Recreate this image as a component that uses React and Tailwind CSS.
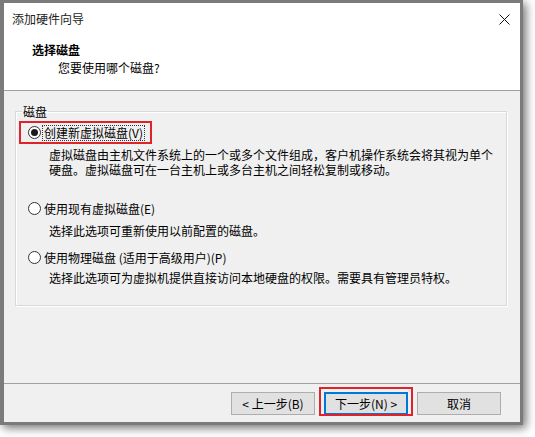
import React from 'react'

const font = { fontFamily: '"Noto Sans CJK SC", "Microsoft YaHei", sans-serif' }

function Radio({ checked }) {
  return (
    <span className="w-[13px] h-[13px] rounded-full border border-[#333] bg-white flex items-center justify-center shrink-0">
      {checked && <span className="w-[7px] h-[7px] rounded-full bg-[#1a1a1a]" />}
    </span>
  )
}

function Btn({ children, primary }) {
  return (
    <button
      className={`w-[84px] h-[23px] text-[12px] leading-none text-black bg-[#e1e1e1] ${
        primary ? 'border-2 border-[#0078d7]' : 'border border-[#adadad]'
      }`}
    >
      {children}
    </button>
  )
}

export default function App() {
  return (
    <div className="w-[535px] h-[437px] bg-white overflow-hidden text-[12px] text-black" style={font}>
      <div className="w-[523px] h-[425px] bg-[#7b7b7b] pt-[3px] pl-[4px] pr-[3px] pb-[3px] shadow-[3px_3px_9px_rgba(0,0,0,0.55)]">
        <div className="w-[516px] h-[419px] bg-[#f0f0f0] flex flex-col">
          {/* title bar */}
          <div className="h-[31px] bg-white flex items-center justify-between pl-[8px] pr-[10px]">
            <span className="text-[12px] text-[#222]">添加硬件向导</span>
            <svg width="11" height="11" viewBox="0 0 11 11" className="mt-[1px]">
              <path d="M0.5 0.5L10.5 10.5M10.5 0.5L0.5 10.5" stroke="#111" strokeWidth="1" />
            </svg>
          </div>

          {/* header */}
          <div className="h-[57px] bg-white border-b border-[#a0a0a0] pl-[28px] pt-[7px] leading-[18px]">
            <div className="font-bold">选择磁盘</div>
            <div className="pl-[26px]">您要使用哪个磁盘?</div>
          </div>

          {/* body */}
          <div className="flex-1 pt-[13px] pl-[11px] pr-[13px] leading-[15px]">
            <fieldset className="border border-[#d9d9d9] shadow-[inset_1px_1px_0_#fff,1px_1px_0_#fff] pb-[20px]">
              <legend className="ml-[6px] px-[1px] leading-[15px]">磁盘</legend>

              <div className="mt-[2px] ml-[3px] w-[133px] h-[23px] border-2 border-[#e0232b] flex items-center pl-[7px] gap-[1px]">
                <Radio checked />
                <span className="border border-dotted border-[#333] px-[1px] leading-[14px]">创建新虚拟磁盘(V)</span>
              </div>
              <div className="mt-[3px] ml-[33px]">
                <div>虚拟磁盘由主机文件系统上的一个或多个文件组成，客户机操作系统会将其视为单个</div>
                <div>硬盘。虚拟磁盘可在一台主机上或多台主机之间轻松复制或移动。</div>
              </div>

              <div className="mt-[23px] ml-[12px] h-[16px] flex items-center gap-[3px]">
                <Radio />
                <span>使用现有虚拟磁盘(E)</span>
              </div>
              <div className="mt-[7px] ml-[33px]">选择此选项可重新使用以前配置的磁盘。</div>

              <div className="mt-[11px] ml-[12px] h-[16px] flex items-center gap-[3px]">
                <Radio />
                <span>使用物理磁盘 (适用于高级用户)(P)</span>
              </div>
              <div className="mt-[5px] ml-[33px]">选择此选项可为虚拟机提供直接访问本地硬盘的权限。需要具有管理员特权。</div>
            </fieldset>
          </div>

          {/* footer */}
          <div className="border-t border-[#a0a0a0] pt-[8px] pb-[7px] pr-[19px] flex justify-end gap-[9px]">
            <Btn>&lt; 上一步(B)</Btn>
            <div className="relative">
              <Btn primary>下一步(N) &gt;</Btn>
              <div className="absolute -left-[5px] -right-[5px] -top-[5px] -bottom-[1px] border-2 border-[#e0232b] pointer-events-none" />
            </div>
            <Btn>取消</Btn>
          </div>
        </div>
      </div>
    </div>
  )
}
